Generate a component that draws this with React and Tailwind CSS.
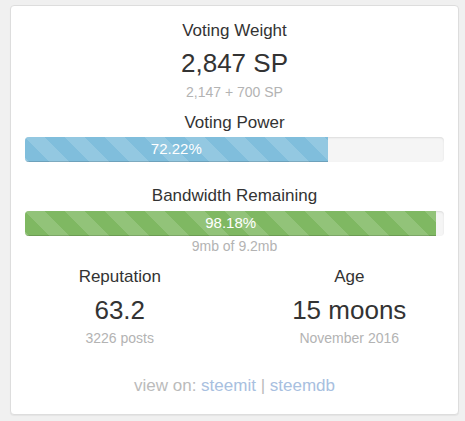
import React from "react";

const stripes =
  "bg-[linear-gradient(45deg,rgba(255,255,255,.15)_25%,transparent_25%,transparent_50%,rgba(255,255,255,.15)_50%,rgba(255,255,255,.15)_75%,transparent_75%,transparent)] bg-size-[40px_40px]";

function Bar({ value, color }) {
  return (
    <div className="h-[25px] w-full overflow-hidden rounded-[4px] bg-[#f5f5f5] shadow-[inset_0_1px_2px_rgba(0,0,0,0.1)]">
      <div
        className={`flex h-full items-center justify-center text-[15px] text-white shadow-[inset_0_-1px_0_rgba(0,0,0,0.15)] ${stripes} ${color}`}
        style={{ width: value + "%" }}
      >
        {value.toFixed(2)}%
      </div>
    </div>
  );
}

export default function App() {
  return (
    <div className="min-h-[421px] w-full bg-[#f0f0f0] pt-[5px] font-['Liberation_Sans',Arial,sans-serif] text-[#333]">
      <div className="mx-[10px] w-[449px] rounded-[4px] border border-[#dddddd] bg-white px-[14px] pb-[16px] pt-[13px] text-center shadow-[0_1px_1px_rgba(0,0,0,0.05)]">
        <div className="text-[17px] leading-[24px]">Voting Weight</div>
        <div className="mt-[5px] text-[26px] leading-[30px]">2,847 SP</div>
        <div className="mt-[4px] text-[14px] leading-[20px] text-[#b3b3b3]">2,147 + 700 SP</div>

        <div className="mt-[9px] text-[17px] leading-[24px]">Voting Power</div>
        <div className="mt-[2px]">
          <Bar value={72.22} color="bg-[#80bedc]" />
        </div>

        <div className="mt-[22px] text-[17px] leading-[24px]">Bandwidth Remaining</div>
        <div className="mt-[3px]">
          <Bar value={98.18} color="bg-[#7fb862]" />
        </div>
        <div className="text-[14px] leading-[20px] text-[#b3b3b3]">9mb of 9.2mb</div>

        <div className="mx-[-20px] mt-[9px] grid grid-cols-2">
          <div>
            <div className="text-[17px] leading-[24px]">Reputation</div>
            <div className="mt-[6px] text-[26px] leading-[30px]">63.2</div>
            <div className="mt-[3px] text-[14px] leading-[20px] text-[#b3b3b3]">3226 posts</div>
          </div>
          <div>
            <div className="text-[17px] leading-[24px]">Age</div>
            <div className="mt-[6px] text-[26px] leading-[30px]">15 moons</div>
            <div className="mt-[3px] text-[14px] leading-[20px] text-[#b3b3b3]">November 2016</div>
          </div>
        </div>

        <div className="mt-[26px] text-[17px] leading-[24px] text-[#bbbbbb]">
          view on: <a className="text-[#a8c0e0]">steemit</a> | <a className="text-[#a8c0e0]">steemdb</a>
        </div>
      </div>
    </div>
  );
}
